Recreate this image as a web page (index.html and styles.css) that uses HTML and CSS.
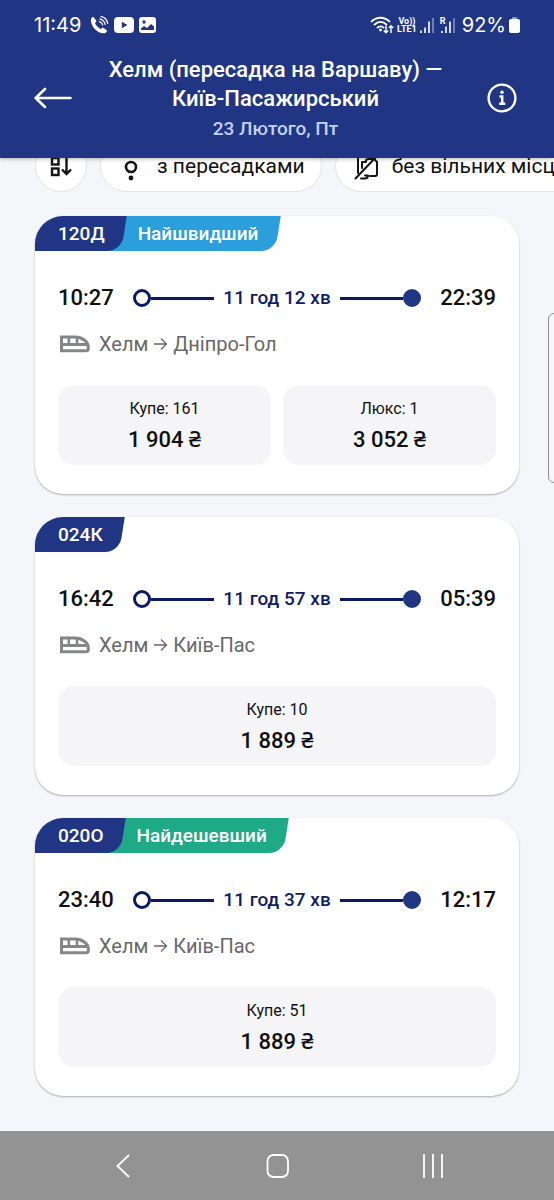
FILE: index.html
```html
<!DOCTYPE html>
<html lang="uk">
<head>
<meta charset="utf-8">
<meta name="viewport" content="width=device-width, initial-scale=1">
<title>Хелм — Київ-Пасажирський</title>
<link rel="stylesheet" href="styles.css">
</head>
<body>
<svg class="defs" aria-hidden="true">
  <symbol id="train" viewBox="0 0 30 18">
    <path d="M1.500 2H15C22 2 28.300 6.500 28.300 12v1.500a2.300 2.300 0 0 1-2.300 2.300H1.500z M1.500 9.400H26.500" fill="none" stroke="currentColor" stroke-width="3"/>
    <path d="M8.800 1.500v8M17 1.500v8" fill="none" stroke="currentColor" stroke-width="2.600"/>
  </symbol>
  <symbol id="arrow" viewBox="0 0 15 14">
    <path d="M1 7h12.500M8 1.500L13.500 7L8 12.500" fill="none" stroke="currentColor" stroke-width="1.300"/>
  </symbol>
</svg>

<header class="header">
  <div class="status">
    <div class="status-side">
      <span class="clock">11:49</span>
      <svg width="20" height="20" viewBox="0 0 20 20" fill="none" stroke="#fff">
        <path d="M4.500 2C2.500 2 1.500 4 2 6.500C3 12.500 8 17.500 13.500 18.300C16 18.600 18 17.500 18 15.500L14 12.500L11.500 14C9.500 13 7 10.500 6 8.300L7.500 6z" fill="#fff" stroke="none"/>
        <path d="M10 6.500a5 5 0 0 1 3.800 3.800M10.500 3.900a7.500 7.500 0 0 1 5.800 5.900M11.500 1.300a9 9 0 0 1 7.300 7.500" stroke-width="1.200"/>
      </svg>
      <svg width="20" height="16" viewBox="0 0 20 16"><rect width="20" height="16" rx="4" fill="#fff"/><path d="M7.800 4.700v6.600L13.500 8z" fill="#203684"/></svg>
      <svg width="17" height="16" viewBox="0 0 17 16"><rect width="17" height="16" rx="3" fill="#fff"/><circle cx="5" cy="5" r="1.700" fill="#203684"/><path d="M2 13V11.500L5 9L8 11L12 7L15 9.500V13z" fill="#203684"/></svg>
    </div>
    <div class="status-side status-right">
      <svg width="24" height="18" viewBox="0 0 24 18" fill="none" stroke="#fff" stroke-width="1.800">
        <path d="M1 6C6.500.3 14.500.3 20 6M4 9C8.200 5 13 5 17 9M7 12C9.200 9.800 12 9.800 14 12"/>
        <circle cx="10.500" cy="14" r="1.400" fill="#fff" stroke="none"/>
        <path d="M16 9.500v7M13.800 14.500l2.200 2.200l2.200-2.200M21 17v-7M18.800 12l2.200-2.200l2.200 2.200" stroke-width="1.400"/>
      </svg>
      <span class="volte"><span>Vo))</span><span>LTE1</span></span>
      <svg width="14" height="16" viewBox="0 0 14 16" stroke="#fff" stroke-width="1.600"><path d="M1 16v-2.500M5 16v-5.500M9 16V4.500"/><path d="M13 16V1" opacity=".45"/></svg>
      <span class="roaming"><span class="roaming-mark">R</span><svg width="15" height="16" viewBox="0 0 15 16" stroke="#fff" stroke-width="1.600"><path d="M2 16v-2M6 16V9.500M10 16V4.500"/><path d="M14 16V1" opacity=".45"/></svg></span>
      <span class="clock battery-text">92%</span>
      <svg width="11" height="16" viewBox="0 0 11 16"><rect x="3" width="5" height="4" rx="1" fill="#8e9ac4"/><rect y="2" width="11" height="14" rx="2" fill="#fff"/></svg>
    </div>
  </div>
  <div class="titlebar">
    <button class="icon-button" aria-label="Назад">
      <svg width="38" height="22" viewBox="0 0 38 22" fill="none" stroke="#fff" stroke-width="2.600" stroke-linecap="round" stroke-linejoin="round"><path d="M36.500 11H2M11 2L1.700 11L11 20"/></svg>
    </button>
    <div class="heading">
      <h1 class="title">Хелм (пересадка на Варшаву) — Київ-Пасажирський</h1>
      <p class="date">23 Лютого, Пт</p>
    </div>
    <button class="icon-button icon-end" aria-label="Інформація">
      <svg width="30" height="30" viewBox="0 0 30 30"><circle cx="15" cy="15" r="13.400" fill="none" stroke="#fff" stroke-width="2.400"/><circle cx="15" cy="9.200" r="1.800" fill="#fff"/><path d="M12.500 13.500H15.200V20.700M12.200 20.700H18.200" fill="none" stroke="#fff" stroke-width="2.500"/></svg>
    </button>
  </div>
</header>

<main class="content">
  <div class="filters">
    <button class="chip chip-round" aria-label="Сортування">
      <svg width="22" height="24" viewBox="0 0 22 24" fill="none" stroke="#151515" stroke-width="2.400"><rect x="2" y="4" width="6.500" height="6.500"/><rect x="2" y="14.500" width="6.500" height="6.500"/><path d="M16.500 2v18M12 15.500l4.500 4.500l4.500-4.500"/></svg>
    </button>
    <button class="chip">
      <svg width="14" height="34" viewBox="0 0 14 34"><circle cx="7" cy="4" r="2.200" fill="#151515"/><circle cx="7" cy="18" r="5" fill="none" stroke="#151515" stroke-width="2.600"/><circle cx="7" cy="29" r="2.400" fill="#151515"/></svg>
      <span>з пересадками</span>
    </button>
    <button class="chip">
      <svg width="26" height="28" viewBox="0 0 26 28" fill="none" stroke="#151515" stroke-width="2" stroke-linecap="round" stroke-linejoin="round"><path d="M4 3v18M8 16V10h4V8l2-1h6M1.500 26.500L23 4M23 10v12q0 2-2 2h-5M7 26.500h4q3 0 3-3h-3"/><path d="M20 7l3 3"/></svg>
      <span>без вільних місць</span>
    </button>
  </div>

  <div class="trips">
    <article class="card">
      <div class="tabs"><span class="tab tab-number">120Д</span><span class="tab tab-note tab-fast">Найшвидший</span></div>
      <div class="journey"><time>10:27</time><div class="track"><i class="ring"></i><i class="line"></i><span class="duration">11 год 12 хв</span><i class="line"></i><i class="dot"></i></div><time>22:39</time></div>
      <p class="route"><svg class="train" width="30" height="18"><use href="#train"/></svg><span>Хелм</span><svg width="15" height="14"><use href="#arrow"/></svg><span>Дніпро-Гол</span></p>
      <div class="seats">
        <button class="seat"><span class="seat-type">Купе: 161</span><span class="price">1 904 ₴</span></button>
        <button class="seat"><span class="seat-type">Люкс: 1</span><span class="price">3 052 ₴</span></button>
      </div>
    </article>

    <article class="card">
      <div class="tabs"><span class="tab tab-number">024К</span></div>
      <div class="journey"><time>16:42</time><div class="track"><i class="ring"></i><i class="line"></i><span class="duration">11 год 57 хв</span><i class="line"></i><i class="dot"></i></div><time>05:39</time></div>
      <p class="route"><svg class="train" width="30" height="18"><use href="#train"/></svg><span>Хелм</span><svg width="15" height="14"><use href="#arrow"/></svg><span>Київ-Пас</span></p>
      <div class="seats">
        <button class="seat"><span class="seat-type">Купе: 10</span><span class="price">1 889 ₴</span></button>
      </div>
    </article>

    <article class="card">
      <div class="tabs"><span class="tab tab-number">020О</span><span class="tab tab-note tab-cheap">Найдешевший</span></div>
      <div class="journey"><time>23:40</time><div class="track"><i class="ring"></i><i class="line"></i><span class="duration">11 год 37 хв</span><i class="line"></i><i class="dot"></i></div><time>12:17</time></div>
      <p class="route"><svg class="train" width="30" height="18"><use href="#train"/></svg><span>Хелм</span><svg width="15" height="14"><use href="#arrow"/></svg><span>Київ-Пас</span></p>
      <div class="seats">
        <button class="seat"><span class="seat-type">Купе: 51</span><span class="price">1 889 ₴</span></button>
      </div>
    </article>
  </div>
</main>

<div class="edge-handle"></div>

<nav class="navbar" aria-label="Системна навігація">
  <button class="icon-button" aria-label="Назад"><svg width="24" height="24" viewBox="0 0 24 24" fill="none" stroke="#fff" stroke-width="1.800"><path d="M19 1L7.500 12L19 23"/></svg></button>
  <button class="icon-button" aria-label="Головна"><svg width="24" height="24" viewBox="0 0 24 24" fill="none" stroke="#fff" stroke-width="1.800"><rect x="2.500" y="1" width="20.500" height="22" rx="6"/></svg></button>
  <button class="icon-button" aria-label="Останні"><svg width="24" height="24" viewBox="0 0 24 24" fill="none" stroke="#fff" stroke-width="1.800"><path d="M4 0v24M13 0v24M22 0v24"/></svg></button>
</nav>
</body>
</html>
```
FILE: styles.css
```css
* {
  box-sizing: border-box;
}

body {
  margin: 0;
  min-height: 100vh;
  display: flex;
  flex-direction: column;
  overflow-x: hidden;
  background: #f5f6f9;
  color: #101010;
  font-family: Roboto, "Noto Sans", sans-serif;
}

button {
  border: 0;
  padding: 0;
  background: none;
  color: inherit;
  font: inherit;
}

svg {
  display: block;
  flex: none;
}

.defs {
  position: absolute;
  width: 0;
  height: 0;
}

/* Header */
.header {
  position: sticky;
  top: 0;
  z-index: 2;
  padding-bottom: 15px;
  background: #203684;
  color: #fff;
  box-shadow: 0 1px 4px rgba(0, 0, 0, 0.3);
}

.status {
  height: 50px;
  padding: 0 34px;
  display: flex;
  justify-content: space-between;
  align-items: center;
}

.status-side {
  display: flex;
  align-items: center;
  gap: 5px;
}

.status-side .clock:first-child {
  margin-right: 3px;
}

.clock {
  font-family: Inter, sans-serif;
  font-size: 20px;
  line-height: 24px;
}

.battery-text {
  margin-left: 4px;
}

.status-right {
  gap: 3px;
}

.volte {
  display: flex;
  flex-direction: column;
  align-items: center;
  font-size: 9px;
  line-height: 8px;
  font-weight: 700;
}

.roaming {
  position: relative;
  margin-left: 3px;
}

.roaming-mark {
  position: absolute;
  left: 0;
  top: 0;
  font-size: 9px;
  line-height: 8px;
  font-weight: 700;
}

.titlebar {
  padding: 5px 37px 0 34px;
  display: grid;
  grid-template-columns: 38px 1fr 38px;
  align-items: center;
}

.icon-button {
  display: flex;
  align-items: center;
  justify-content: center;
}

.titlebar .icon-button {
  padding-bottom: 3px;
}

.icon-end {
  justify-content: flex-end;
}

.heading {
  text-align: center;
}

.title {
  margin: 0 auto;
  max-width: 360px;
  font-size: 22px;
  line-height: 29px;
  font-weight: 500;
}

.date {
  margin: 2px 0 0;
  font-size: 19px;
  line-height: 28px;
  font-weight: 500;
  color: #c5d0fa;
}

/* Filters */
.content {
  flex: 1;
  margin-top: -18px;
  padding-bottom: 35px;
}

.filters {
  padding-left: 35px;
  display: flex;
  gap: 13px;
  overflow: hidden;
}

.chip {
  flex: none;
  height: 52px;
  padding: 0 16px 0 23px;
  display: flex;
  align-items: center;
  gap: 19px;
  border: 1px solid #e4e4e8;
  border-radius: 26px;
  background: #fff;
  font-size: 21px;
  white-space: nowrap;
}

.chip:last-child {
  padding-left: 18px;
  gap: 12px;
}

.chip-round {
  width: 52px;
  padding: 0;
  justify-content: center;
}

/* Trip cards */
.trips {
  padding: 24px 35px 0;
  display: flex;
  flex-direction: column;
  gap: 23px;
}

.card {
  padding-bottom: 29px;
  overflow: hidden;
  border-radius: 28px;
  background: #fff;
  box-shadow: 0 1px 2px rgba(0, 0, 0, 0.3);
}

.tabs {
  display: flex;
}

.tab {
  position: relative;
  padding-right: 19px;
  font-size: 19px;
  line-height: 35px;
  font-weight: 500;
  color: #fff;
}

.tab::before {
  content: "";
  position: absolute;
  inset: 0 0 0 -30px;
  z-index: -1;
  border-radius: 0 0 14px 0;
  background: var(--tab-color);
  transform: skewX(-9deg);
}

.tab-number {
  --tab-color: #203684;
  z-index: 1;
  padding-left: 23px;
}

.tab-note {
  z-index: 0;
  padding-left: 14px;
}

.tab-fast {
  --tab-color: #2a9fdc;
}

.tab-cheap {
  --tab-color: #1eaa87;
}

.journey {
  margin: 33px 23px 0;
  display: flex;
  align-items: center;
  gap: 19px;
  font-size: 22px;
  line-height: 28px;
  font-weight: 500;
}

.track {
  flex: 1;
  display: flex;
  align-items: center;
  color: #0f1c66;
}

.ring,
.dot {
  width: 18px;
  height: 18px;
  border: 3px solid #0c1a63;
  border-radius: 50%;
}

.dot {
  border-color: #203684;
  background: #203684;
}

.line {
  flex: 1;
  height: 3px;
  background: #0c1a63;
}

.duration {
  margin: 0 9px;
  font-size: 19px;
  font-weight: 500;
}

.route {
  margin: 18px 25px 0;
  display: flex;
  align-items: center;
  gap: 5px;
  font-size: 20px;
  line-height: 28px;
  color: #686868;
}

.train {
  margin-right: 4px;
  color: #858688;
}

.seats {
  margin: 27px 23px 0;
  display: flex;
  gap: 12px;
}

.seat {
  flex: 1;
  padding: 10px 0 11px;
  display: flex;
  flex-direction: column;
  align-items: center;
  gap: 3px;
  border-radius: 16px;
  background: #f5f5f8;
}

.seat-type {
  font-size: 16px;
  line-height: 28px;
}

.price {
  font-size: 22px;
  line-height: 28px;
  font-weight: 500;
}

/* System chrome */
.edge-handle {
  position: fixed;
  right: -8px;
  top: 313px;
  width: 14px;
  height: 170px;
  border: 1px solid #8c8c8e;
  border-radius: 6px;
  background: #f8f8fa;
}

.navbar {
  height: 69px;
  padding: 0 44px;
  display: grid;
  grid-template-columns: repeat(3, 1fr);
  align-items: center;
  background: #939393;
}
```
